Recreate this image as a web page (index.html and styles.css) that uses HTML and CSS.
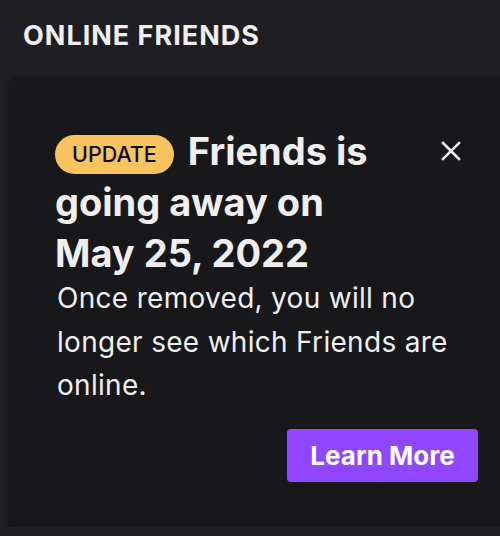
FILE: index.html
```html
<!DOCTYPE html>
<html lang="en">
<head>
  <meta charset="UTF-8" />
  <title>Online Friends</title>
  <link rel="stylesheet" href="styles.css">
</head>
<body>

<!-- section header -->
<h2 class="section-title">ONLINE FRIENDS</h2>

<!-- deprecation notice -->
<div class="notice">
  <div class="notice-head">
    <h3 class="notice-title"><span class="badge">UPDATE</span>Friends is going away on May 25, 2022</h3>
    <button class="close-btn" aria-label="Close">
      <svg width="22" height="22" viewBox="0 0 22 22">
        <path d="M3 3 L19 19 M19 3 L3 19" stroke="#efeff1" stroke-width="2.6" stroke-linecap="square" fill="none"/>
      </svg>
    </button>
  </div>
  <p class="notice-text">Once removed, you will no longer see which Friends are online.</p>
  <div class="notice-foot">
    <button class="learn-btn">Learn More</button>
  </div>
</div>

</body>
</html>
```

FILE: styles.css
```css
body {
  font-family: Inter, "Noto Sans", sans-serif;
  background: #1f1f23;
  color: #efeff1;
  margin: 0;
  padding: 0;
  overflow: hidden;
}
.section-title {
  margin: 0;
  padding: 20px 0 0 23px;
  font-size: 27px;
  font-weight: 700;
  letter-spacing: 1px;
  line-height: 32px;
  height: 58px;
}
.notice {
  margin-left: 10px;
  width: 510px;
  height: 449px;
  box-sizing: border-box;
  background: #18181b;
  border-radius: 6px;
  box-shadow: 0 2px 6px rgba(0, 0, 0, 0.6);
  padding: 48px 0 0 45px;
}
.notice-head {
  display: flex;
  align-items: flex-start;
  width: 407px;
}
.notice-title {
  margin: 0;
  width: 330px;
  font-size: 38px;
  font-weight: 700;
  line-height: 51px;
}
.badge {
  display: inline-block;
  vertical-align: middle;
  background: #f9c45f;
  color: #0e0e10;
  font-size: 21.5px;
  font-weight: 500;
  line-height: 39px;
  padding: 0 17px;
  border-radius: 20px;
  margin-right: 14px;
}
.close-btn {
  margin-left: auto;
  margin-top: 14px;
  background: none;
  border: none;
  padding: 0;
  cursor: pointer;
}
.close-btn svg {
  display: block;
}
.notice-text {
  margin: -2px 0 0 2px;
  width: 415px;
  font-size: 28px;
  letter-spacing: 0.3px;
  line-height: 43.5px;
}
.notice-foot {
  display: flex;
  justify-content: flex-end;
  width: 423px;
  margin-top: 21px;
}
.learn-btn {
  background: #9147ff;
  color: #fff;
  border: none;
  border-radius: 4px;
  font-family: inherit;
  font-size: 26px;
  font-weight: 700;
  width: 191px;
  height: 53px;
  padding: 0;
  cursor: pointer;
}
```
